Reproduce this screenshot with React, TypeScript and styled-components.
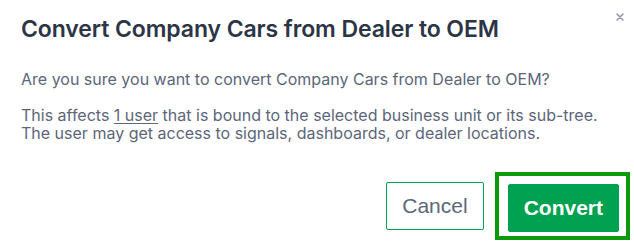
import React from "react";
import styled, { createGlobalStyle } from "styled-components";

const GlobalStyle = createGlobalStyle`
  html, body {
    margin: 0;
    padding: 0;
    background: #ffffff;
  }
  body {
    font-family: Inter, "Noto Sans", sans-serif;
  }
`;

export default function App() {
  return (
    <>
      <GlobalStyle />
      <Dialog>
        <Header>
          <Title>Convert Company Cars from Dealer to OEM</Title>
          <CloseButton aria-label="Close">
            <svg width="8" height="8" viewBox="0 0 8 8">
              <path d="M1 1 L7 7 M7 1 L1 7" stroke="#8c95a8" strokeWidth="1.5" strokeLinecap="round" />
            </svg>
          </CloseButton>
        </Header>
        <Body>
          <Paragraph>Are you sure you want to convert Company Cars from Dealer to OEM?</Paragraph>
          <Paragraph>
            This affects <UserLink>1 user</UserLink> that is bound to the selected business unit or its sub-tree.
            <br />
            The user may get access to signals, dashboards, or dealer locations.
          </Paragraph>
        </Body>
        <Footer>
          <Button>Cancel</Button>
          <FocusRing>
            <Button $primary>Convert</Button>
          </FocusRing>
        </Footer>
      </Dialog>
    </>
  );
}

const Dialog = styled.div`
  width: 634px;
  height: 241px;
  box-sizing: border-box;
  display: flex;
  flex-direction: column;
  padding: 0 4px 1px 21px;
`;

const Header = styled.div`
  display: flex;
  align-items: flex-start;
  justify-content: space-between;
  padding-top: 14px;
`;

const Title = styled.h2`
  margin: 0;
  font-size: 23px;
  font-weight: 600;
  line-height: 30px;
  color: #2b3546;
  letter-spacing: -0.1px;
`;

const CloseButton = styled.button`
  border: none;
  background: none;
  padding: 0;
  margin: -1px 6px 0 0;
  width: 8px;
  height: 8px;
  display: flex;
  cursor: pointer;
`;

const Body = styled.div`
  display: flex;
  flex-direction: column;
  gap: 18px;
  margin-top: 26px;
`;

const Paragraph = styled.p`
  margin: 0;
  font-size: 16px;
  line-height: 18px;
  color: #5c6679;
`;

const UserLink = styled.span`
  text-decoration: underline;
  text-underline-offset: 2px;
`;

const Footer = styled.div`
  margin-top: auto;
  display: flex;
  align-items: center;
  justify-content: flex-end;
  gap: 11px;
`;

const FocusRing = styled.div`
  border: 4px solid #0a990a;
  padding: 8px 7px 4px 9px;
  display: flex;
`;

const Button = styled.button<{ $primary?: boolean }>`
  height: 48px;
  box-sizing: border-box;
  padding: 0 15px;
  border-radius: 2px;
  border: 1px solid #00a150;
  background: ${(p) => (p.$primary ? "#00a150" : "#ffffff")};
  color: ${(p) => (p.$primary ? "#ffffff" : "#5c6679")};
  font-family: "Liberation Sans", Arial, sans-serif;
  font-size: 21px;
  font-weight: ${(p) => (p.$primary ? 700 : 400)};
  cursor: pointer;
`;
